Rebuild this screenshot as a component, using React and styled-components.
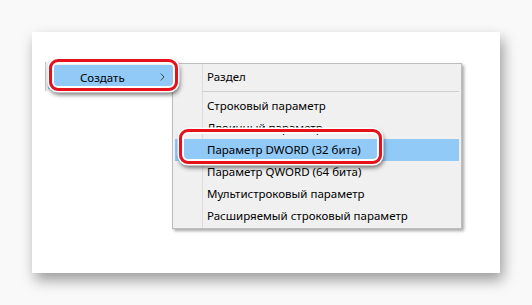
import React from 'react';
import styled, { createGlobalStyle } from 'styled-components';

const GlobalStyle = createGlobalStyle`
    body {
        margin: 0;
        background: #f9f9f9;
        font-family: "Noto Sans", "Open Sans", sans-serif;
    }
`

const Page = styled.div`
    width: 532px;
    height: 305px;
    padding: 32px 0 0 32px;
    box-sizing: border-box;
`

const Card = styled.div`
    width: 468px;
    height: 241px;
    background: #fff;
    box-shadow: 3px 7px 13px rgba(0, 0, 0, 0.38);
    padding: 30px 0 0 13px;
    box-sizing: border-box;
    display: flex;
    align-items: flex-start;
`

const ParentMenu = styled.div`
    position: relative;
    width: 127px;
    height: 29px;
    box-sizing: border-box;
    background: #f0f0f0;
    border-left: 1px solid #c6c6c6;
    padding: 3px 0 0 2px;
`

const ParentItem = styled.div`
    height: 24px;
    background: #91c9f7;
    display: flex;
    align-items: center;
    justify-content: space-between;
    padding: 0 7px 0 32px;
    font-size: 11.5px;
    color: #000;
`

const Ring = styled.div`
    position: absolute;
    z-index: 2;
    left: ${p => p.left}px;
    top: ${p => p.top}px;
    width: ${p => p.width}px;
    height: ${p => p.height}px;
    box-sizing: border-box;
    border: 3.5px solid #e5111b;
    border-radius: 9px;
    box-shadow: inset 0 0 0 2px #fff, 0 0 0 1.5px #fff, 1px 3px 4px 1px rgba(0, 0, 0, 0.5);
    pointer-events: none;
`

const SubMenu = styled.div`
    margin-top: 1px;
    width: 290px;
    box-sizing: border-box;
    background-color: #f0f0f0;
    background-image: linear-gradient(to right, transparent 29px, #dcdcdc 29px, #dcdcdc 30px, transparent 30px);
    border: 1px solid #bdbdbd;
    box-shadow: 2px 2px 3px rgba(0, 0, 0, 0.35);
    padding: 2px 2px 1px 2px;
`

const Item = styled.div`
    position: relative;
    height: 22px;
    line-height: 22px;
    padding-left: 32px;
    font-size: 11.5px;
    color: #000;
    white-space: nowrap;
    background: ${p => (p.active ? '#91c9f7' : 'transparent')};
`

const Separator = styled.div`
    height: 7px;
    display: flex;
    align-items: center;
    padding-left: 27px;

    &::after {
        content: '';
        flex: 1;
        height: 1px;
        background: #cfcfcf;
    }
`

const Chevron = () => (
    <svg width="5" height="8" viewBox="0 0 5 8">
        <path d="M0.8 0.6 L4 4 L0.8 7.4" fill="none" stroke="#444" strokeWidth="1" />
    </svg>
)

const items = [
    { label: 'Раздел' },
    { separator: true },
    { label: 'Строковый параметр' },
    { label: 'Двоичный параметр' },
    { label: 'Параметр DWORD (32 бита)', active: true, ring: true },
    { label: 'Параметр QWORD (64 бита)' },
    { label: 'Мультистроковый параметр' },
    { label: 'Расширяемый строковый параметр' },
]

export default function App() {
    return (
        <>
            <GlobalStyle />
            <Page>
                <Card>
                    <ParentMenu>
                        <ParentItem>
                            <span>Создать</span>
                            <Chevron />
                        </ParentItem>
                        <Ring left={3} top={-3} width={129} height={32} />
                    </ParentMenu>
                    <SubMenu>
                        {items.map((item, i) =>
                            item.separator ? (
                                <Separator key={i} />
                            ) : (
                                <Item key={i} active={item.active}>
                                    {item.label}
                                    {item.ring && <Ring left={4} top={-10} width={203} height={35} />}
                                </Item>
                            )
                        )}
                    </SubMenu>
                </Card>
            </Page>
        </>
    )
}
